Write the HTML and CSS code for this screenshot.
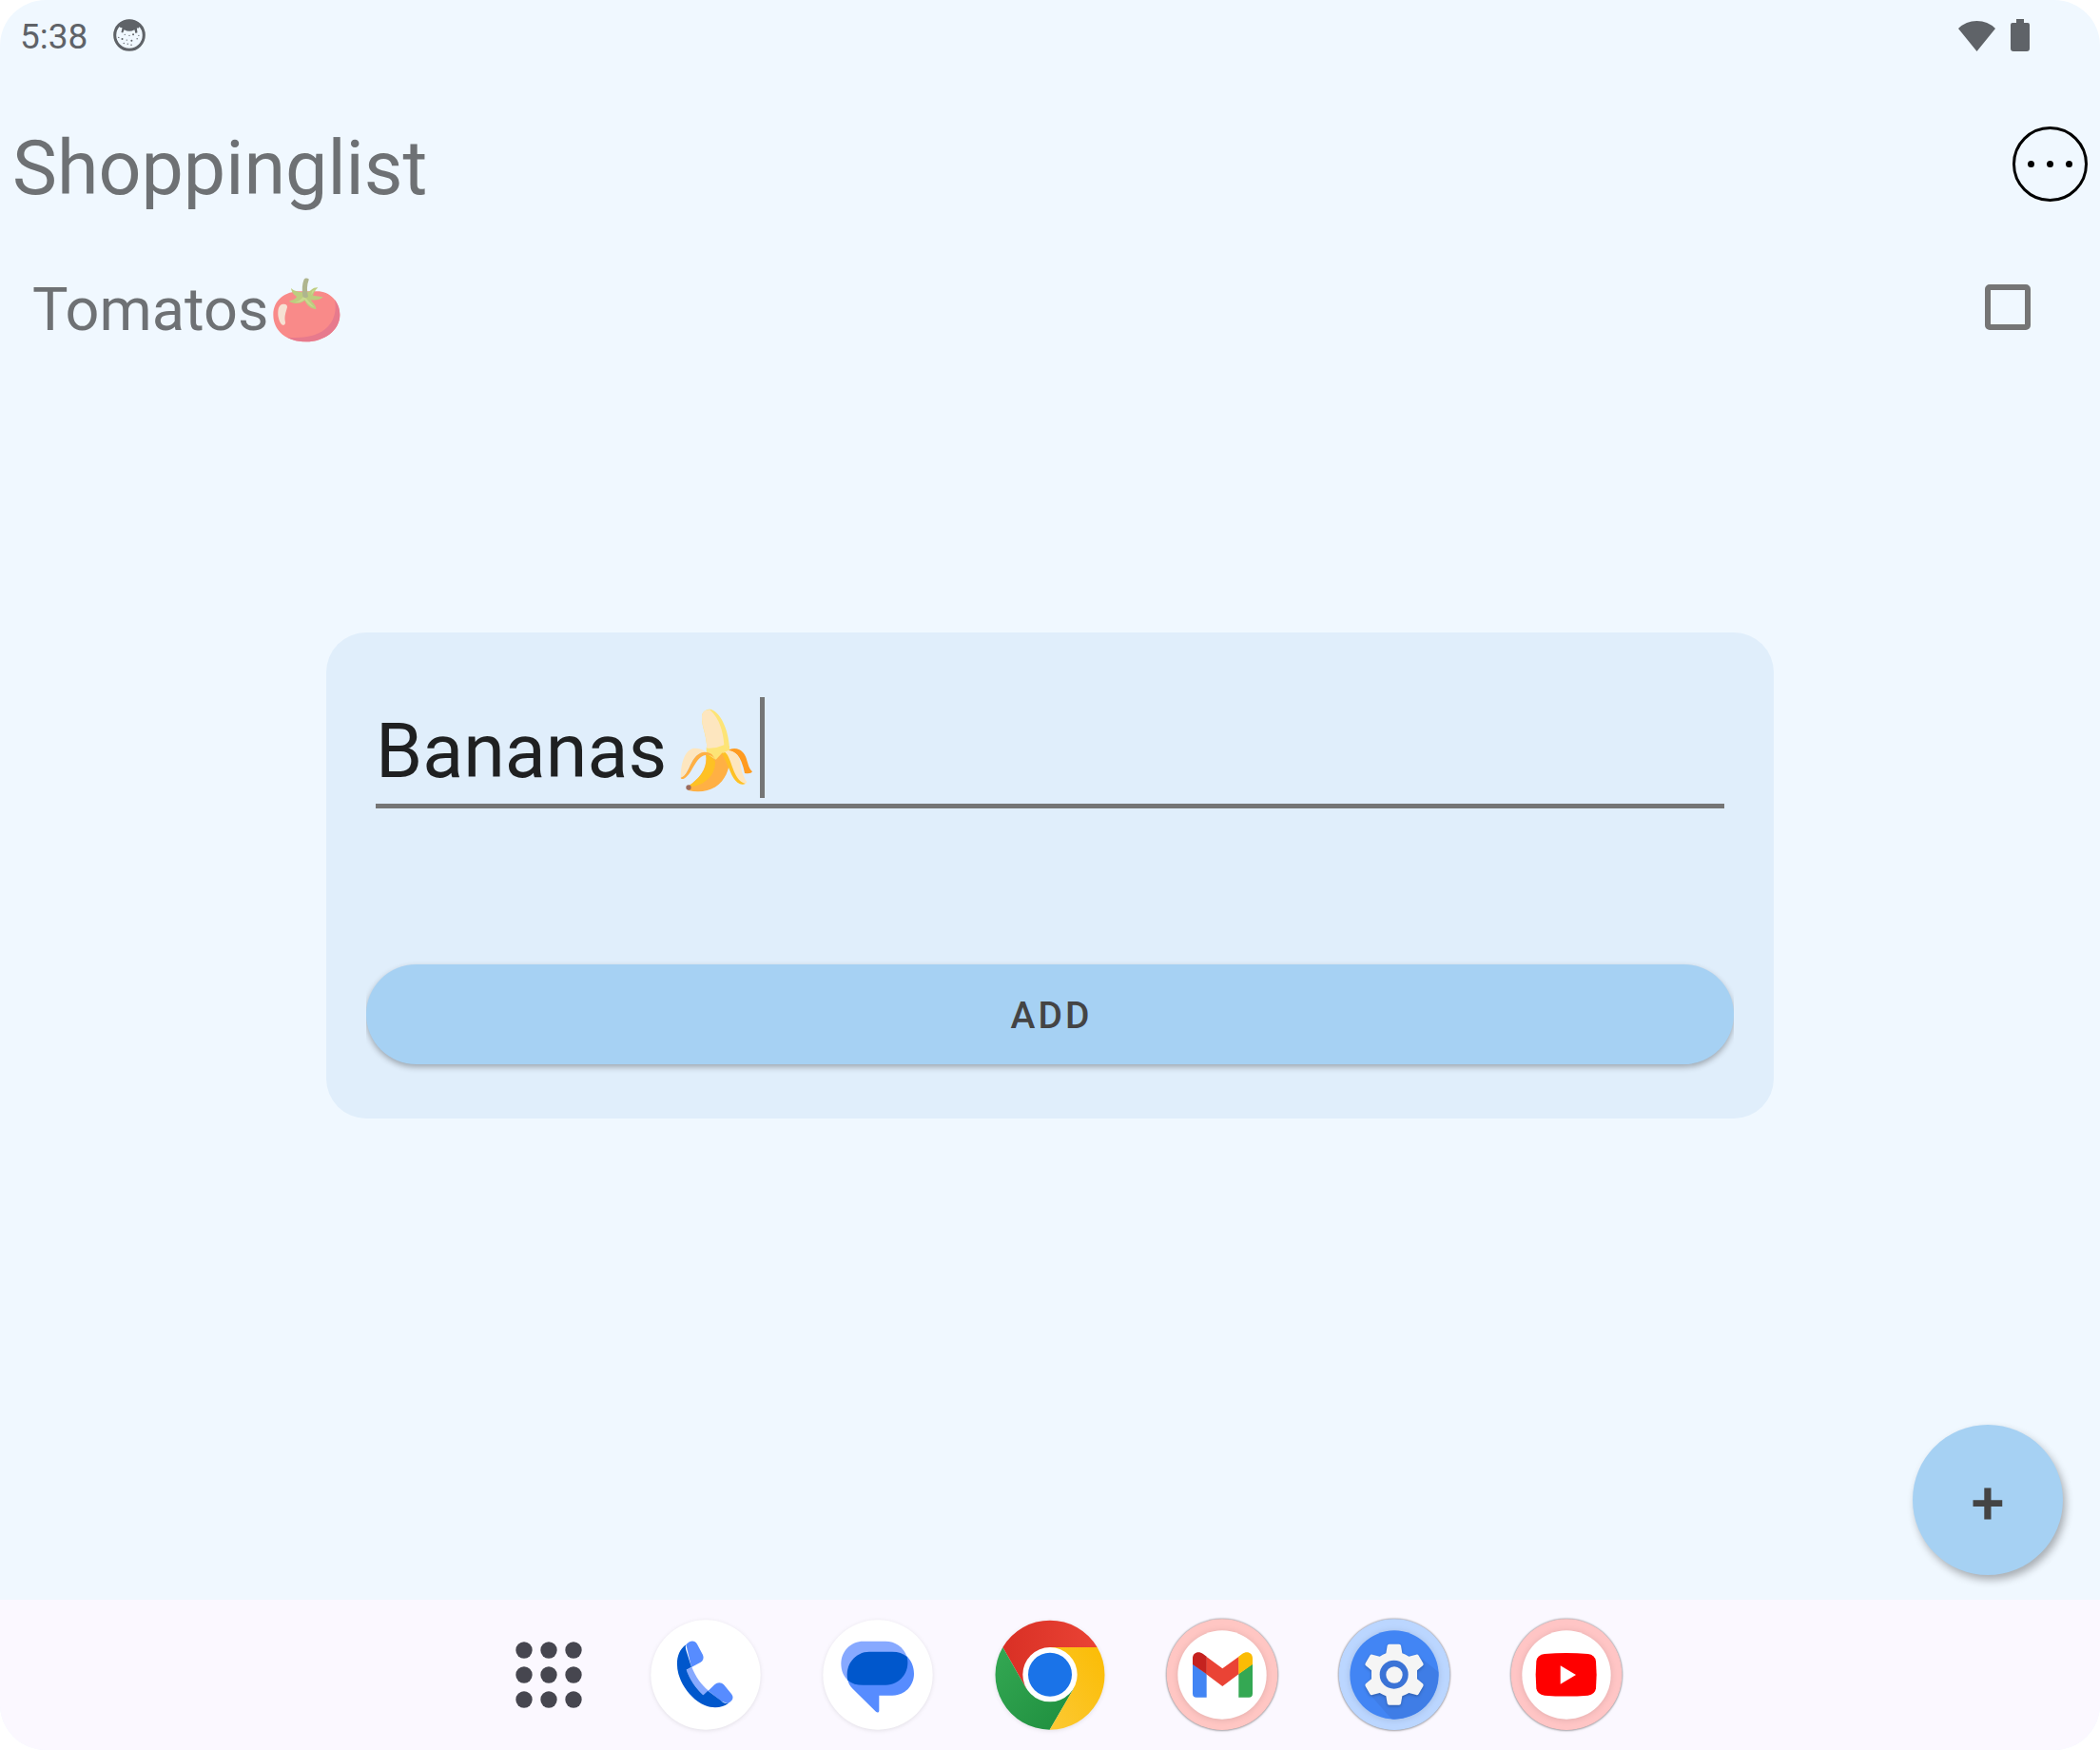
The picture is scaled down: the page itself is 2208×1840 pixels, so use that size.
FILE: index.html
```html
<!DOCTYPE html>
<html lang="en">
<head>
<meta charset="utf-8">
<meta name="viewport" content="width=device-width, initial-scale=1">
<title>Shoppinglist</title>
<link rel="stylesheet" href="styles.css">
</head>
<body>
<div class="screen">
  <div class="status-bar">
    <time class="clock">5:38</time>
    <svg class="status-app" viewBox="358 64 100 100" aria-hidden="true">
      <circle cx="408" cy="114" r="45" fill="none" stroke="#5f6368" stroke-width="9"/>
      <path d="M373 82Q388 66 408 66T443 82L437 92L431 92L433 106L427 108L424 97Q408 106 392 97L388 107L383 105L386 91L379 90Z" fill="#5f6368"/>
      <g fill="#5f6368"><circle cx="375" cy="121" r="2"/><circle cx="386" cy="126" r="3"/><circle cx="400" cy="129" r="2"/><circle cx="415" cy="131" r="3"/><circle cx="432" cy="125" r="2"/><circle cx="420" cy="112" r="3"/><circle cx="408" cy="115" r="2"/><circle cx="394" cy="112" r="2"/><circle cx="437" cy="115" r="2"/><circle cx="391" cy="139" r="2"/><circle cx="403" cy="141" r="2"/><circle cx="414" cy="144" r="2"/></g>
    </svg>
    <div class="status-right">
      <svg class="wifi" viewBox="0 0 39 33" aria-hidden="true"><path d="M0 9Q8 1 19.500 1T39 9L19.500 33Z"/></svg>
      <svg class="battery" viewBox="0 0 20 34" aria-hidden="true"><path d="M6 0h8v4h4q2 0 2 2v25q0 3-3 3H3q-3 0-3-3V6q0-2 2-2h4Z"/></svg>
    </div>
  </div>

  <main class="app">
    <header class="app-header">
      <h1 class="title">Shoppinglist</h1>
      <button class="more" type="button" aria-label="More options">
        <svg viewBox="0 0 79 79" aria-hidden="true"><circle cx="39.500" cy="39.500" r="38" fill="none" stroke="#000" stroke-width="3"/><circle cx="19.500" cy="39.500" r="3.500"/><circle cx="39.500" cy="39.500" r="3.500"/><circle cx="59.500" cy="39.500" r="3.500"/></svg>
      </button>
    </header>

    <ul class="items">
      <li class="item">
        <label class="item-label" for="item-tomatos">Tomatos
          <svg class="tomato" viewBox="48 33 216 210" aria-hidden="true">
            <path d="M52 153C52 105 92 79 135 79H185C226 76 262 108 262 153C262 203 211 238 156 238C95 238 52 205 52 153Z" fill="#f98a89"/>
            <path d="M246 106C257 120 262 137 262 153C262 203 211 238 156 238C132 238 112 233 96 224C145 227 185 223 215 199C246 174 252 139 246 106Z" fill="#e77a8d"/>
            <path d="M79 120C90 117 97 121 96 129C91 147 86 159 90 176C91 184 84 188 79 184C64 168 62 125 79 120Z" fill="#f6e1d3"/>
            <path d="M108 69C120 80 133 80 143 82L163 80C171 78 175 66 193 67C186 74 180 82 177 92L209 97C201 108 181 107 170 106C177 116 188 124 187 136C172 132 159 126 151 108C138 119 119 120 101 110C112 106 121 105 126 96C119 91 110 84 108 69Z" fill="#bdcd7f"/>
            <path d="M120 112C133 112 140 104 149 94L181 130C169 125 160 118 151 105C142 112 133 116 120 112ZM174 78L189 70C181 76 177 84 172 91Z" fill="#cbd990"/>
            <path d="M145 96C142 73 143 55 149 41C153 35 166 37 164 43C158 59 157 77 162 96Q154 103 145 96Z" fill="#afb58e"/>
          </svg>
        </label>
        <input class="item-check" id="item-tomatos" type="checkbox">
      </li>
    </ul>

    <button class="fab" type="button" aria-label="Add item">+</button>
  </main>

  <nav class="taskbar" aria-label="Apps">
    <button class="task launcher" type="button" aria-label="All apps">
      <svg viewBox="3 0 252 348" aria-hidden="true"><g fill="#46464f"><circle cx="51" cy="96" r="26"/><circle cx="129" cy="96" r="26"/><circle cx="207" cy="96" r="26"/><circle cx="51" cy="174" r="26"/><circle cx="129" cy="174" r="26"/><circle cx="207" cy="174" r="26"/><circle cx="51" cy="252" r="26"/><circle cx="129" cy="252" r="26"/><circle cx="207" cy="252" r="26"/></g></svg>
    </button>
    <button class="task" type="button" aria-label="Phone">
      <svg class="soft" viewBox="553 97 348 348" aria-hidden="true">
        <circle cx="727" cy="271" r="173" fill="#fff"/>
        <path d="M666 256L683 246C695 276 713 302 736 321L719 335C696 313 677 286 666 256Z" fill="#87a9ff"/>
        <path d="M665 176C675 163 692 160 700 174L718 208C722 218 719 226 711 231L682 247Z" fill="#578cff"/>
        <path d="M735 321L755 302C764 293 777 294 784 302L808 331C816 341 814 353 797 361L778 355Z" fill="#578cff"/>
        <path d="M665 176C662 183 664 188 665 193L682 246L666 255C677 286 696 313 719 335L734 321L774 351C782 359 790 362 799 360C782 374 752 379 724 367C684 350 653 309 641 268C632 234 636 196 665 176Z" fill="#0057cc"/>
      </svg>
    </button>
    <button class="task" type="button" aria-label="Messages">
      <svg class="soft" viewBox="1097 97 348 348" aria-hidden="true">
        <circle cx="1271" cy="271" r="173" fill="#fff"/>
        <path d="M1225 165H1295C1326 165 1352 183 1362 212L1176 288C1163 276 1155 258 1155 235C1155 196 1186 165 1225 165Z" fill="#87a9ff"/>
        <path d="M1362 212C1376 226 1385 244 1385 267C1385 306 1355 336 1316 336H1275V384C1275 390 1269 391 1265 387L1192 315C1183 306 1178 298 1176 286Z" fill="#578cff"/>
        <path d="M1244 198H1316C1336 198 1351 203 1363 214C1374 262 1340 303 1296 303H1224C1205 303 1189 299 1176 288C1165 239 1200 198 1244 198Z" fill="#0057cc"/>
      </svg>
    </button>
    <button class="task" type="button" aria-label="Chrome">
      <svg class="soft" viewBox="139 97 348 348" aria-hidden="true">
        <defs>
          <linearGradient id="chrome-red" x1="0" x2="1"><stop offset="0" stop-color="#d93025"/><stop offset="1" stop-color="#ea4335"/></linearGradient>
          <linearGradient id="chrome-green" x1="0" x2="1" y2="1"><stop offset="0" stop-color="#34a853"/><stop offset="1" stop-color="#1e8e3e"/></linearGradient>
          <linearGradient id="chrome-yellow" x1="1" x2="0" y1="0" y2="1"><stop offset="0" stop-color="#fbbc04"/><stop offset="1" stop-color="#fcc934"/></linearGradient>
        </defs>
        <path d="M164 184A173 173 0 0 1 462 184H313L238 314Z" fill="url(#chrome-red)"/>
        <path d="M164 184A173 173 0 0 0 312 444L388 314H238Z" fill="url(#chrome-green)"/>
        <path d="M462 184A173 173 0 0 1 312 444L388 314L313 184Z" fill="url(#chrome-yellow)"/>
        <circle cx="313" cy="270" r="86" fill="#fff"/><circle cx="313" cy="270" r="69" fill="#1a73e8"/>
      </svg>
    </button>
    <button class="task" type="button" aria-label="Gmail">
      <svg class="ringed" viewBox="682 97 348 348" aria-hidden="true">
        <circle cx="856" cy="270" r="175" fill="#ffc6c3"/><circle class="disc" cx="856" cy="271" r="140" fill="#fff"/>
        <path d="M763 236L807 268V342H775Q763 342 763 330Z" fill="#4285f4"/>
        <path d="M908 268L952 236V330Q952 342 940 342H908Z" fill="#34a853"/>
        <path d="M806 213L857 251L909 213V268L857 307L806 269Z" fill="#ea4335"/>
        <path d="M763 238V219C763 201 781 194 796 205L807 213V269Z" fill="#c5221f"/>
        <path d="M952 238V219C952 201 934 194 919 205L908 213V269Z" fill="#fbbc04"/>
      </svg>
    </button>
    <button class="task" type="button" aria-label="Settings">
      <svg class="ringed" viewBox="145 97 348 348" aria-hidden="true">
        <circle cx="319" cy="270" r="175" fill="#bbd6ff"/><circle class="disc" cx="319" cy="271" r="140" fill="#4285f4"/>
        <path d="M409 222L458 262A140 140 0 0 1 310 410L244 335L300 300Z" fill="#3f7de6"/>
        <path class="gear" d="M303 174H334Q339 174 340 179L344 203Q355 207 365 213L388 207Q393 205 396 210L410 234Q412 239 409 242L391 257V284L409 299Q412 302 410 307L396 331Q393 336 388 334L365 328Q355 334 344 338L340 361Q339 366 334 366H303Q298 366 297 361L293 338Q283 334 273 328L250 334Q245 336 242 331L228 307Q226 302 229 299L247 284V257L229 242Q226 239 228 234L242 210Q245 205 250 207L273 213Q283 207 293 203L297 179Q298 174 303 174Z" fill="#f5f5f5"/>
        <circle cx="318" cy="270" r="45" fill="#3b73d6"/><circle cx="319" cy="271" r="26" fill="#f5f5f5"/>
      </svg>
    </button>
    <button class="task" type="button" aria-label="YouTube">
      <svg class="ringed" viewBox="688 97 348 348" aria-hidden="true">
        <circle cx="862" cy="270" r="175" fill="#ffc5c5"/><circle class="disc" cx="862" cy="271" r="140" fill="#fff"/>
        <path d="M793 205Q861 199 930 205Q952 208 955 228Q959 270 955 314Q952 333 930 336Q861 341 793 336Q770 333 767 314Q763 270 767 228Q770 208 793 205Z" fill="red"/>
        <path d="M843 242L892 271L843 300Z" fill="#fff"/>
      </svg>
    </button>
  </nav>

  <div class="overlay">
    <form class="dialog" role="dialog" aria-label="New item">
      <div class="field">
        <input class="field-input" type="text" value="Bananas" aria-label="Item name">
        <svg class="banana" viewBox="75 72 231 264" aria-hidden="true">
          <path d="M231 201C262 190 279 213 284 229C290 249 293 262 303 271Q299 279 279 276Q271 235 256 218Q244 207 226 205Z" fill="#ff9b20"/>
          <path d="M158 194L231 190L229 211L188 236L158 214Z" fill="#fde476"/>
          <path d="M160 193C157 151 144 130 144 101C143 78 163 73 174 75C201 84 229 136 231 203L213 194Z" fill="#fde476"/>
          <path d="M160 197C158 151 144 130 144 101C143 84 154 75 169 76C198 101 211 142 214 187Q188 199 160 197Z" fill="#fde6bf"/>
          <path d="M156 215L188 233L209 211L230 249C219 315 164 345 101 330L98 318C143 290 163 254 156 215Z" fill="#ffb044"/>
          <path d="M157 215Q176 221 186 239C187 292 137 321 102 317C146 284 164 255 157 215Z" fill="#fec124"/>
          <path d="M78 291C76 244 91 200 120 197Q143 197 159 210Q133 206 115 233C101 256 94 279 78 291Z" fill="#fde6bf"/>
          <path d="M77 290C95 285 102 258 116 234C132 209 153 202 175 216L188 233Q174 216 155 219C121 225 113 284 85 294Q77 295 77 290Z" fill="#ffb044"/>
          <path d="M207 213L227 204C252 207 263 224 266 248C269 276 279 292 286 304Q282 314 266 310C234 293 237 229 207 213Z" fill="#fde6bf"/>
          <path d="M206 213L217 210C239 226 240 298 281 309Q269 315 256 305C233 285 230 251 206 213Z" fill="#fec124"/>
          <circle cx="102" cy="321" r="8" fill="#9b6b5e"/>
        </svg>
        <span class="caret" aria-hidden="true"></span>
      </div>
      <button class="add" type="button">ADD</button>
    </form>
  </div>
</div>
</body>
</html>
```
FILE: styles.css
```css
* {
  box-sizing: border-box;
}

body {
  margin: 0;
  background: #fff;
  font-family: Roboto, "Noto Sans", sans-serif;
}

button {
  padding: 0;
  border: 0;
  background: none;
  font: inherit;
  cursor: pointer;
}

svg {
  display: block;
  overflow: visible;
}

.screen {
  position: relative;
  display: flex;
  flex-direction: column;
  min-height: 100vh;
  border-radius: 48px;
  overflow: hidden;
  background: #f0f8ff;
}

/* Status bar */
.status-bar {
  display: flex;
  align-items: center;
  height: 74px;
  padding: 0 74px 0 21px;
  color: #5f6368;
}

.clock {
  padding-top: 4px;
  font-size: 37px;
  line-height: 44px;
}

.status-app {
  width: 34px;
  height: 34px;
  margin-left: 27px;
}

.status-right {
  display: flex;
  align-items: center;
  gap: 16px;
  margin-left: auto;
  fill: #5f6368;
}

.wifi {
  width: 39px;
  height: 33px;
}

.battery {
  width: 20px;
  height: 34px;
}

/* Shopping list */
.app {
  position: relative;
  flex: 1;
}

.app-header {
  display: flex;
  justify-content: space-between;
  align-items: flex-start;
  padding: 57px 13px 0;
}

.title {
  margin: 0;
  color: #6e7174;
  font-size: 79px;
  font-weight: 400;
  line-height: 92px;
}

.more {
  padding-top: 2px;
}

.more svg {
  width: 79px;
  height: 79px;
}

.items {
  margin: 64px 0 0;
  padding: 0;
  list-style: none;
}

.item {
  display: flex;
  justify-content: space-between;
  align-items: flex-start;
  padding: 0 73px 0 34px;
}

.item-label {
  display: flex;
  align-items: center;
  gap: 4px;
  padding-top: 2px;
  color: #6e7174;
  font-size: 63px;
  line-height: 74px;
}

.tomato {
  width: 72px;
  height: 70px;
}

.item-check {
  appearance: none;
  width: 48px;
  height: 48px;
  margin: 12px 0 0;
  border: 6px solid #757575;
  border-radius: 5px;
}

.item-check:checked {
  background: #757575;
}

.fab {
  position: absolute;
  right: 39px;
  bottom: 26px;
  width: 158px;
  height: 158px;
  padding-top: 6px;
  border-radius: 50%;
  background: #a6d1f3;
  box-shadow: 3px 5px 9px rgba(0, 0, 0, 0.3);
  color: #444;
  font-size: 63px;
  font-weight: 500;
}

/* Add-item dialog */
.overlay {
  position: absolute;
  inset: 0;
  display: flex;
  justify-content: center;
  align-items: center;
  padding: 0 42px;
}

.dialog {
  display: flex;
  flex-direction: column;
  gap: 164px;
  width: 100%;
  max-width: 1522px;
  padding: 68px 42px 57px;
  border-radius: 42px;
  background: #e0eefb;
}

.field {
  display: flex;
  align-items: flex-end;
  margin: 0 10px;
  padding-bottom: 6px;
  border-bottom: 5px solid #757575;
}

.field-input {
  width: 307px;
  height: 106px;
  padding: 8px 0 0;
  border: 0;
  outline: 0;
  background: none;
  color: #1f2021;
  font: inherit;
  font-size: 79px;
}

.banana {
  width: 77px;
  height: 88px;
  margin: 0 7px 6px 13px;
}

.caret {
  width: 5px;
  height: 106px;
  background: #757575;
}

.add {
  height: 105px;
  padding: 3px 0 0 3px;
  border-radius: 53px;
  background: #a6d1f3;
  box-shadow: 0 3px 6px rgba(0, 0, 0, 0.3);
  clip-path: inset(-12px 0 -16px);
  color: #444;
  font-size: 39px;
  font-weight: 500;
  letter-spacing: 3px;
}

/* Taskbar */
.taskbar {
  display: flex;
  justify-content: center;
  align-items: center;
  gap: 65px;
  height: 158px;
  padding-left: 31px;
  background: #fbf8ff;
}

.task svg {
  width: 116px;
  height: 116px;
}

.launcher svg {
  width: 84px;
}

.soft {
  filter: drop-shadow(0 1px 2px rgba(0, 0, 0, 0.1));
}

.ringed {
  filter: drop-shadow(0 0 1px rgba(0, 0, 0, 0.5)) drop-shadow(0 1px 1px rgba(0, 0, 0, 0.15));
}

.disc {
  filter: drop-shadow(0 2px 10px rgba(0, 0, 0, 0.12));
}

.gear {
  filter: drop-shadow(0 4px 5px rgba(0, 0, 0, 0.25));
}
```
